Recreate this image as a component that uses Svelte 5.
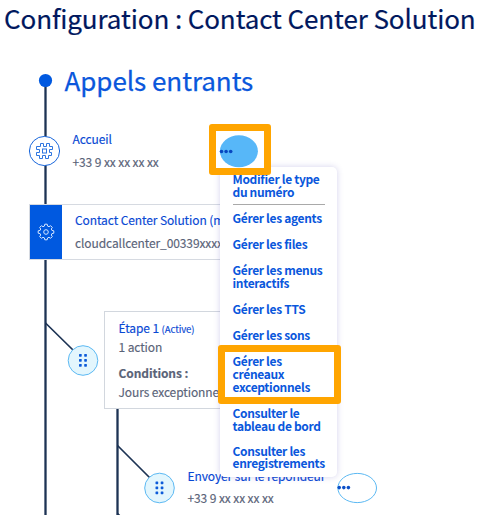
<script>
  const groups = [
    { lines: ['Modifier le type', 'du numéro'], rule: true },
    { lines: ['Gérer les agents'] },
    { lines: ['Gérer les files'] },
    { lines: ['Gérer les menus', 'interactifs'] },
    { lines: ['Gérer les TTS'] },
    { lines: ['Gérer les sons'] },
    { lines: ['Gérer les', 'créneaux', 'exceptionnels'], marked: true },
    { lines: ['Consulter le', 'tableau de bord'] },
    { lines: ['Consulter les', 'enregistrements'], tight: true }
  ];
  const grips = [
    { x: 83, y: 360.5 },
    { x: 159.5, y: 488 }
  ];
</script>

<main>
  <h1>Configuration : Contact Center Solution</h1>

  <svg class="wires" width="483" height="515" viewBox="0 0 483 515">
    <g stroke="#1d3354" fill="none">
      <path d="M45.5 80V515M117.5 408V515" stroke-width="2.3" />
      <path d="M45.5 323L73 350M117.5 445.5L149.5 477.5M117.5 513.5L120 516" stroke-width="1.7" />
    </g>
    <circle cx="45.5" cy="80.5" r="6.6" fill="#0059e0" />
    <ellipse cx="44.5" cy="151" rx="15.1" ry="14.6" fill="#fff" stroke="#1967dc" />
    <g transform="translate(36 143)" fill="none" stroke="#2f76e0" stroke-width="1">
      <path d="M4.5 .5H7.5V3.5H10.5V.5H13.5V3.5H16.5V6.5H13.5V9.5H15.5V12.5H12.5V15.5H9.5V12.5H6.5V15.5H3.5V12.5H.5V9.5H3.5V6.5H.5V3.5H4.5Z" />
      <rect x="6.5" y="6" width="4" height="4" />
    </g>
    {#each grips as g}
      <ellipse cx={g.x} cy={g.y} rx="14.8" ry="14.8" fill="#e3f6fd" stroke="#5cb9f3" />
      {#each [-5, 0, 5] as dy}
        {#each [-2.7, 2.5] as dx}
          <rect x={g.x + dx - 1.3} y={g.y + dy - 1.5} width="2.7" height="2.7" rx=".6" fill="#0c5bd9" />
        {/each}
      {/each}
    {/each}
    <ellipse cx="357.2" cy="488" rx="19.3" ry="14.6" fill="#fff" stroke="#5cb9f3" />
    <g fill="#0c50c8">
      <circle cx="339.2" cy="487.6" r="1.8" />
      <circle cx="343.8" cy="487.6" r="1.8" />
      <circle cx="348.4" cy="487.6" r="1.8" />
    </g>
  </svg>

  <h2 class="node root">Appels entrants</h2>
  <div class="node welcome">
    <p class="name">Accueil</p>
    <p>+33 9 xx xx xx xx</p>
  </div>
  <section class="node center">
    <div class="tile">
      <svg width="18" height="18" viewBox="0 0 18 18" fill="none" stroke="#d5e6ff" stroke-width="1">
        <path d="M7.4 3.1L7.8 1.2H10.2L10.6 3.1L12 3.7L13.6 2.7L15.3 4.4L14.3 6L14.9 7.4L16.8 7.8V10.2L14.9 10.6L14.3 12L15.3 13.6L13.6 15.3L12 14.3L10.6 14.9L10.2 16.8H7.8L7.4 14.9L6 14.3L4.4 15.3L2.7 13.6L3.7 12L3.1 10.6L1.2 10.2V7.8L3.1 7.4L3.7 6L2.7 4.4L4.4 2.7L6 3.7Z" stroke-linejoin="round" />
        <circle cx="9" cy="9" r="2.3" />
      </svg>
    </div>
    <div class="body">
      <p class="name">Contact Center Solution (m</p>
      <p>cloudcallcenter_00339xxxx</p>
    </div>
  </section>
  <section class="node step">
    <p class="name">Étape 1 <small>(Active)</small></p>
    <p>1 action</p>
    <p class="cond"><b>Conditions :</b></p>
    <p>Jours exceptionnels</p>
  </section>
  <div class="node voicemail">
    <p class="name">Envoyer sur le répondeur</p>
    <p>+33 9 xx xx xx xx</p>
  </div>

  <nav class="menu">
    {#each groups as g}
      <div class="item" class:rule={g.rule} class:tight={g.tight}>
        {#each g.lines as line}<span>{line}</span>{/each}
        {#if g.marked}<i class="mark"></i>{/if}
      </div>
    {/each}
  </nav>

  <div class="trigger">
    <svg width="49" height="38" viewBox="0 0 49 38">
      <ellipse cx="22.9" cy="20.2" rx="19" ry="16" fill="#57b7f8" />
      <g fill="#0747c0">
        <circle cx="5.5" cy="20.5" r="1.8" />
        <circle cx="10.1" cy="20.5" r="1.8" />
        <circle cx="14.7" cy="20.5" r="1.8" />
      </g>
    </svg>
  </div>
</main>

<style>
  :global(body) { background: #fff; overflow: hidden; }
  main {
    position: relative;
    width: 483px;
    height: 515px;
    overflow: hidden;
    font-family: "Noto Sans CJK SC", "Open Sans", sans-serif;
    font-size: 12px;
    letter-spacing: -.1px;
    color: #5a6378;
    white-space: nowrap;
  }
  h1, h2, p { margin: 0; font-weight: 400; }
  h1 { padding-left: 4px; font-size: 26px; line-height: 36px; color: #00185e; -webkit-text-stroke: .2px; }
  .wires { position: absolute; left: 0; top: 0; }
  .node { position: absolute; }
  p { line-height: 23px; -webkit-text-stroke: .15px; }
  .name { color: #0848d4; }
  .root { left: 64.5px; top: 62px; font-size: 26px; line-height: 36px; color: #0a57dc; letter-spacing: -.05px; -webkit-text-stroke: .25px; }
  .welcome { left: 72.5px; top: 127px; }
  .center {
    left: 29px; top: 204px; width: 260px; height: 56px; box-sizing: border-box;
    display: flex; border: 1px solid #d6dae1; background: #fff;
  }
  .tile { width: 32px; display: flex; align-items: center; justify-content: center; background: #0059e0; }
  .body { padding: 3px 0 0 13px; }
  .step {
    left: 104px; top: 311px; width: 200px; height: 98px; box-sizing: border-box;
    padding: 6px 0 0 13.5px; border: 1px solid #d2d7de; background: #fff;
  }
  .step p { line-height: 19px; }
  .step .cond { margin-top: 7px; }
  small { font-size: 9.6px; line-height: 1; }
  .voicemail { left: 187.5px; top: 464px; }
  .voicemail p + p { margin-top: -1px; }
  .menu {
    position: absolute; left: 220px; top: 167px; width: 117px; height: 310px; box-sizing: border-box;
    padding: 5px 12px 0 12.5px; display: flex; flex-direction: column; gap: 12.9px;
    border-radius: 5px; background: #fff; box-shadow: 0 0 6px rgba(60, 50, 170, .22);
    font-size: 12px; font-weight: 700; color: #0a57dc; letter-spacing: -.33px;
  }
  .item { position: relative; display: flex; flex-direction: column; line-height: 13px; }
  .rule { padding-bottom: 6px; border-bottom: 1px solid #a9a9a9; margin-bottom: -6.6px; }
  .tight { line-height: 12.5px; }
  .mark { position: absolute; left: -14.5px; top: -9px; width: 109px; height: 45px; border: 7px solid #ffa500; border-radius: 3px; }
  .trigger {
    position: absolute; left: 209px; top: 124px; width: 62px; height: 51px; box-sizing: border-box;
    border: 7px solid #ffa500; border-radius: 3px; background: #fff;
  }
  .trigger svg { display: block; }
</style>
